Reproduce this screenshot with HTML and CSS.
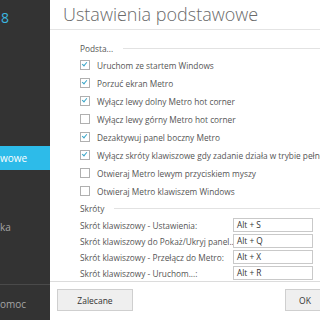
FILE: index.html
```html
<!DOCTYPE html>
<html lang="pl">
<head>
<meta charset="utf-8">
<link rel="stylesheet" href="styles.css">
</head>
<body>
<div class="app">
  <aside class="sidebar">
    <div class="brand">8</div>
    <div class="nav-item active"><span class="frag w1">wowe</span></div>
    <div class="nav-item plain"><span class="frag w2">ka</span></div>
    <div class="sidebar-footer"><span class="frag w3">omoc</span></div>
  </aside>
  <main class="panel">
    <header class="header"><h1 class="title">Ustawienia podstawowe</h1></header>
    <section class="content">
      <div class="group-title"><span>Podsta...</span><span class="rule"></span></div>
      <label class="check"><span class="box on"></span>Uruchom ze startem Windows</label>
      <label class="check"><span class="box on"></span>Porzuć ekran Metro</label>
      <label class="check"><span class="box on"></span>Wyłącz lewy dolny Metro hot corner</label>
      <label class="check"><span class="box"></span>Wyłącz lewy górny Metro hot corner</label>
      <label class="check"><span class="box on"></span>Dezaktywuj panel boczny Metro</label>
      <label class="check"><span class="box on"></span>Wyłącz skróty klawiszowe gdy zadanie działa w trybie pełno</label>
      <label class="check"><span class="box"></span>Otwieraj Metro lewym przyciskiem myszy</label>
      <label class="check"><span class="box"></span>Otwieraj Metro klawiszem Windows</label>
      <div class="group-title second"><span>Skróty</span><span class="rule"></span></div>
      <div class="shortcut"><span class="sc-label">Skrót klawiszowy - Ustawienia:</span><span class="sc-input">Alt + S</span></div>
      <div class="shortcut"><span class="sc-label">Skrót klawiszowy do Pokaż/Ukryj panel...</span><span class="sc-input">Alt + Q</span></div>
      <div class="shortcut"><span class="sc-label">Skrót klawiszowy - Przełącz do Metro:</span><span class="sc-input">Alt + X</span></div>
      <div class="shortcut"><span class="sc-label">Skrót klawiszowy - Uruchom...:</span><span class="sc-input">Alt + R</span></div>
    </section>
    <footer class="footer">
      <button class="btn">Zalecane</button>
      <button class="btn ok">OK</button>
    </footer>
  </main>
</div>
</body>
</html>
```
FILE: styles.css
```css
html, body {
  margin: 0;
  padding: 0;
  width: 320px;
  height: 320px;
  overflow: hidden;
  background: #ffffff;
  font-family: "Open Sans", "Noto Sans", sans-serif;
}
.app {
  display: flex;
  width: 320px;
  height: 320px;
}
.sidebar {
  width: 50px;
  flex: none;
  background: #333333;
  display: flex;
  flex-direction: column;
  overflow: hidden;
  color: #a5a5a5;
  font-size: 10px;
}
.brand {
  height: 36px;
  color: #3bb7e0;
  font-size: 14px;
  line-height: 36px;
  padding-left: 1px;
}
.nav-item {
  height: 24px;
  line-height: 24px;
  white-space: nowrap;
  display: flex;
}
.frag {
  display: block;
}
.w1 { width: 24px; text-align: right; }
.w2 { width: 9px; text-align: right; }
.w3 { width: 23px; text-align: right; }
.nav-item.active {
  margin-top: 110px;
  background: #2dbbe9;
  color: #ffffff;
  width: 50px;
}
.nav-item.plain {
  margin-top: 45px;
}
.sidebar-footer {
  margin-top: auto;
  height: 35px;
  line-height: 38px;
  border-top: 1px solid #4a4a4a;
  display: flex;
}
.panel {
  flex: 1;
  display: flex;
  flex-direction: column;
  min-width: 0;
  overflow: hidden;
}
.header {
  height: 29px;
  border-bottom: 1px solid #e4e4e4;
  padding-left: 13px;
  flex: none;
}
.title {
  margin: 0;
  font-weight: 300;
  font-size: 18px;
  line-height: 28px;
  color: #6a6a6a;
  white-space: nowrap;
}
.content {
  flex: 1;
  padding: 11px 0 0 30px;
  font-size: 8.3px;
  color: #555555;
}
.group-title {
  display: flex;
  align-items: center;
  gap: 10px;
  height: 14px;
  margin-bottom: 1px;
}
.group-title.second {
  margin-top: 1px;
  margin-bottom: 2px;
}
.rule {
  flex: 1;
  height: 1px;
  background: #e2e2e2;
}
.check {
  display: flex;
  align-items: center;
  gap: 7px;
  height: 18px;
  white-space: nowrap;
}
.box {
  width: 8px;
  height: 8px;
  border: 1px solid #b0b0b0;
  flex: none;
  position: relative;
  background: #fff;
}
.box.on::after {
  content: "";
  position: absolute;
  left: 2px;
  top: 0px;
  width: 2px;
  height: 4px;
  border: solid #3aa7c9;
  border-width: 0 1.5px 1.5px 0;
  transform: rotate(40deg);
}
.shortcut {
  display: flex;
  align-items: center;
  height: 16px;
  white-space: nowrap;
}
.sc-label {
  width: 153px;
  flex: none;
}
.sc-input {
  width: 75px;
  height: 12px;
  line-height: 12px;
  border: 1px solid #c9c9c9;
  padding-left: 3px;
  color: #333;
  flex: none;
  background: #fff;
}
.footer {
  height: 35px;
  flex: none;
  border-top: 1px solid #dcdcdc;
  display: flex;
  justify-content: space-between;
  align-items: flex-start;
  padding: 7px 0 0 7px;
}
.btn {
  font-family: inherit;
  font-size: 8.5px;
  color: #333;
  background: #efefef;
  border: 1px solid #cfcfcf;
  height: 22px;
  padding: 0;
  width: 76px;
}
.btn.ok {
  width: 40px;
  margin-right: -5px;
}
```
